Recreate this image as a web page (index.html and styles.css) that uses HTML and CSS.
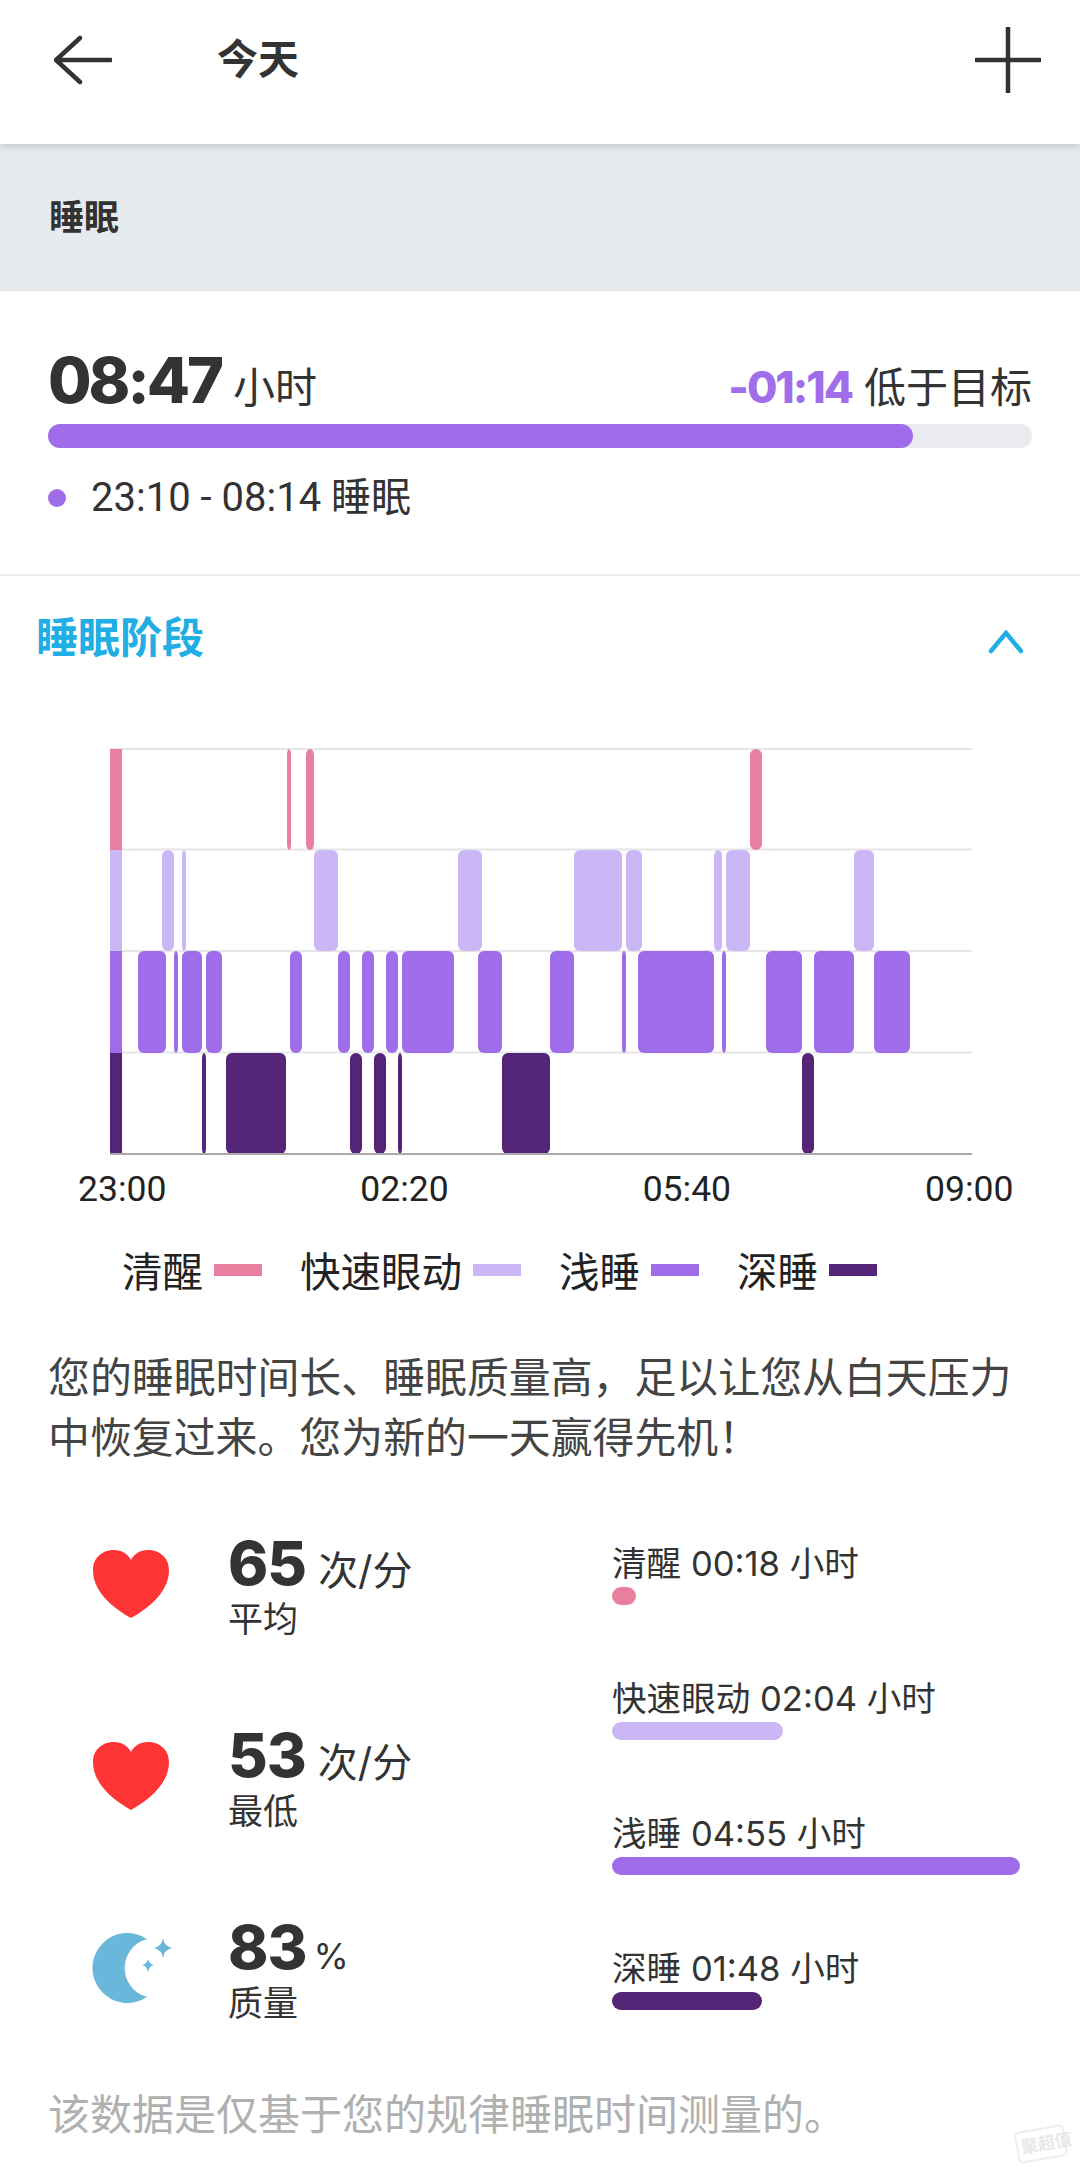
FILE: index.html
```html
<!DOCTYPE html>
<html lang="zh-CN">
<head>
<meta charset="utf-8">
<title>睡眠</title>
<link rel="stylesheet" href="styles.css">
</head>
<body>
<div class="page">
  <header class="topbar">
    <svg class="ico-back" width="58" height="50" viewBox="0 0 58 50"><path d="M26 3 L2 25 L26 47 M2 25 H57"/></svg>
    <h1 class="title">今天</h1>
    <svg class="ico-plus" width="66" height="66" viewBox="0 0 66 66"><path d="M33 0 V66 M1 33 H65"/></svg>
  </header>
  <div class="band"><h2 class="band-title">睡眠</h2></div>

  <section class="summary">
    <div class="sum-head">
      <div class="sum-left"><span class="big">08:47</span><span class="unit">小时</span></div>
      <div class="sum-right"><span class="delta">-01:14</span><span class="unit">低于目标</span></div>
    </div>
    <div class="track"><div class="fill"></div></div>
    <div class="period"><span class="dot"></span><span>23:10 - 08:14 睡眠</span></div>
  </section>

  <section class="stages">
    <div class="stages-head">
      <h3 class="stages-title">睡眠阶段</h3>
      <svg class="ico-chev" width="36" height="24" viewBox="0 0 36 24"><path d="M3 21 L18 3 L33 21"/></svg>
    </div>
    <svg class="chart" width="862" height="408" viewBox="110 748 862 408">
      <g class="lines">
        <line x1="110" x2="972" y1="749" y2="749"/>
        <line x1="110" x2="972" y1="849.5" y2="849.5"/>
        <line x1="110" x2="972" y1="951" y2="951"/>
        <line x1="110" x2="972" y1="1052.5" y2="1052.5"/>
      </g>
      <g class="awake">
        <rect class="edge" x="110" y="749" width="12" height="101"/>
        <rect x="287" y="749" width="4" height="101"/>
        <rect x="306" y="749" width="8" height="101"/>
        <rect x="750" y="749" width="12" height="101"/>
      </g>
      <g class="rem">
        <rect class="edge" x="110" y="850" width="12" height="101"/>
        <rect x="162" y="850" width="12" height="101"/>
        <rect x="182" y="850" width="4" height="101"/>
        <rect x="314" y="850" width="24" height="101"/>
        <rect x="458" y="850" width="24" height="101"/>
        <rect x="574" y="850" width="48" height="101"/>
        <rect x="626" y="850" width="16" height="101"/>
        <rect x="714" y="850" width="8" height="101"/>
        <rect x="726" y="850" width="24" height="101"/>
        <rect x="854" y="850" width="20" height="101"/>
      </g>
      <g class="light">
        <rect class="edge" x="110" y="951" width="12" height="102"/>
        <rect x="138" y="951" width="28" height="102"/>
        <rect x="174" y="951" width="4" height="102"/>
        <rect x="182" y="951" width="20" height="102"/>
        <rect x="206" y="951" width="16" height="102"/>
        <rect x="290" y="951" width="12" height="102"/>
        <rect x="338" y="951" width="12" height="102"/>
        <rect x="362" y="951" width="12" height="102"/>
        <rect x="386" y="951" width="12" height="102"/>
        <rect x="402" y="951" width="52" height="102"/>
        <rect x="478" y="951" width="24" height="102"/>
        <rect x="550" y="951" width="24" height="102"/>
        <rect x="622" y="951" width="4" height="102"/>
        <rect x="638" y="951" width="76" height="102"/>
        <rect x="722" y="951" width="4" height="102"/>
        <rect x="766" y="951" width="36" height="102"/>
        <rect x="814" y="951" width="40" height="102"/>
        <rect x="874" y="951" width="36" height="102"/>
      </g>
      <g class="deep">
        <rect class="edge" x="110" y="1053" width="12" height="101"/>
        <rect x="202" y="1053" width="4" height="101"/>
        <rect x="226" y="1053" width="60" height="101"/>
        <rect x="350" y="1053" width="12" height="101"/>
        <rect x="374" y="1053" width="12" height="101"/>
        <rect x="398" y="1053" width="4" height="101"/>
        <rect x="502" y="1053" width="48" height="101"/>
        <rect x="802" y="1053" width="12" height="101"/>
      </g>
      <line class="axis" x1="110" x2="972" y1="1154" y2="1154"/>
    </svg>
    <div class="times"><span>23:00</span><span>02:20</span><span>05:40</span><span>09:00</span></div>
    <div class="legend">
      <div class="leg"><span>清醒</span><i class="sw c-awake"></i></div>
      <div class="leg"><span>快速眼动</span><i class="sw c-rem"></i></div>
      <div class="leg"><span>浅睡</span><i class="sw c-light"></i></div>
      <div class="leg"><span>深睡</span><i class="sw c-deep"></i></div>
    </div>
    <p class="note">您的睡眠时间长、睡眠质量高，足以让您从白天压力中恢复过来。您为新的一天赢得先机！</p>
  </section>

  <section class="stats">
    <div class="col-vitals">
      <div class="vital">
        <svg class="ico-heart" width="76" height="68" viewBox="0 0 76 68"><path d="M38 68 C24 60 0 44 0 20 C0 7 10 0 21 0 C29 0 35 4 38 10 C41 4 47 0 55 0 C66 0 76 7 76 20 C76 44 52 60 38 68 Z"/></svg>
        <div class="v-text"><div class="v-line"><span class="v-num">65</span><span class="v-unit">次/分</span></div><div class="v-label">平均</div></div>
      </div>
      <div class="vital">
        <svg class="ico-heart" width="76" height="68" viewBox="0 0 76 68"><path d="M38 68 C24 60 0 44 0 20 C0 7 10 0 21 0 C29 0 35 4 38 10 C41 4 47 0 55 0 C66 0 76 7 76 20 C76 44 52 60 38 68 Z"/></svg>
        <div class="v-text"><div class="v-line"><span class="v-num">53</span><span class="v-unit">次/分</span></div><div class="v-label">最低</div></div>
      </div>
      <div class="vital">
        <svg class="ico-moon" width="80" height="70" viewBox="0 0 80 70"><path class="moon" d="M55 6 A35 35 0 1 0 55 64 A30 30 0 0 1 55 6 Z"/><path class="star" d="M71 5 Q72 13 80 15 Q72 17 71 25 Q70 17 62 15 Q70 13 71 5 Z"/><path class="star" d="M56 26 Q57 31 62 32 Q57 33 56 39 Q55 33 50 32 Q55 31 56 26 Z"/></svg>
        <div class="v-text"><div class="v-line"><span class="v-num">83</span><span class="v-pct">%</span></div><div class="v-label">质量</div></div>
      </div>
    </div>
    <div class="col-stages">
      <div class="st"><div class="st-text">清醒 00:18 小时</div><div class="st-bar c-awake w-awake"></div></div>
      <div class="st"><div class="st-text">快速眼动 02:04 小时</div><div class="st-bar c-rem w-rem"></div></div>
      <div class="st"><div class="st-text">浅睡 04:55 小时</div><div class="st-bar c-light w-light"></div></div>
      <div class="st"><div class="st-text">深睡 01:48 小时</div><div class="st-bar c-deep w-deep"></div></div>
    </div>
  </section>

  <p class="foot">该数据是仅基于您的规律睡眠时间测量的。</p>
  <div class="wm"><span>聚超值</span></div>
</div>
</body>
</html>
```
FILE: styles.css
```css
* { box-sizing: border-box; }
html, body { margin: 0; padding: 0; background: #fff; }
.page {
  position: relative;
  width: 1080px;
  height: 2173px;
  overflow: hidden;
  color: #333;
  font-family: "Inter", "Noto Sans CJK SC", sans-serif;
}
h1, h2, h3, p { margin: 0; font-weight: inherit; font-size: inherit; }

.topbar {
  display: flex;
  align-items: center;
  height: 144px;
  padding: 0 39px 24px 54px;
  background: #fff;
  position: relative;
  z-index: 1;
  box-shadow: 0 2px 8px rgba(0,0,0,.18);
}
.ico-back path, .ico-plus path { fill: none; stroke: #333; stroke-width: 4.5; stroke-linecap: round; stroke-linejoin: miter; }
.title { margin: -2px 0 0 105px; font-size: 41px; font-weight: 700; line-height: 48px; flex: 1; }
.band { height: 146px; background: #e7ebee; padding-left: 49px; display: flex; align-items: center; }
.band-title { font-size: 35px; font-weight: 700; line-height: 40px; }

.summary { height: 286px; padding: 53px 48px 0; border-bottom: 2px solid #eee; border-top: 1px solid #e6e6e6; }
.sum-head { display: flex; justify-content: space-between; align-items: baseline; height: 76px; }
.big { font-size: 63px; font-weight: 800; line-height: 72px; letter-spacing: -3px; }
.unit { font-size: 42px; margin-left: 12px; color: #333; }
.delta { font-size: 44px; font-weight: 800; color: #a06eea; letter-spacing: -2px; }
.track { margin-top: 4px; height: 24px; border-radius: 12px; background: #e9ebee; }
.fill { width: 865px; height: 24px; border-radius: 12px; background: #9f6dea; }
.period { display: flex; align-items: center; margin-top: 27px; font-family: "Roboto", "Noto Sans CJK SC", sans-serif; font-size: 40px; line-height: 46px; }
.dot { width: 18px; height: 18px; border-radius: 50%; background: #9f6dea; margin-right: 25px; }

.stages-head { display: flex; justify-content: space-between; align-items: center; height: 172px; padding: 0 56px 48px 36px; }
.stages-title { font-size: 42px; font-weight: 700; color: #20aee4; line-height: 50px; }
.ico-chev { margin-top: 8px; }
.ico-chev path { fill: none; stroke: #20aee4; stroke-width: 4.5; stroke-linecap: round; }
.chart { display: block; margin-left: 110px; }
.lines line { stroke: #e6e6e6; stroke-width: 2; }
.axis { stroke: #aaa; stroke-width: 2; }
.chart rect { rx: 6px; }
.chart rect.edge { rx: 0; }
.awake { fill: #e97f9e; }
.rem { fill: #cbb7f5; }
.light { fill: #9f6dea; }
.deep { fill: #552577; }
.times { display: flex; justify-content: space-between; width: 935px; margin: 11px 0 0 78px; font-family: "Roboto", "Noto Sans CJK SC", sans-serif; font-size: 35.5px; line-height: 44px; color: #222; }
.times span { width: 88px; text-align: center; white-space: nowrap; }
.legend { display: flex; margin: 37px 0 0 122px; gap: 38px; font-size: 40.5px; line-height: 50px; color: #222; }
.leg { display: flex; align-items: center; gap: 11px; }
.sw { display: block; width: 48px; height: 12px; margin-top: -6px; }
.c-awake { background: #e97f9e; }
.c-rem { background: #cbb7f5; }
.c-light { background: #9f6dea; }
.c-deep { background: #552577; }
.note { margin: 50px 48px 0 48px; font-size: 41.9px; line-height: 59.5px; color: #444; }

.stats { display: flex; margin-top: 64px; }
.col-vitals { width: 612px; padding-left: 92px; }
.vital { display: flex; height: 192px; }
.ico-heart, .ico-moon { flex: none; }
.ico-heart { margin: 19px 59px 0 1px; }
.ico-moon { margin: 18px 56px 0 0; }
.v-line { display: flex; align-items: baseline; height: 64px; }
.v-num { font-size: 61px; font-weight: 800; line-height: 64px; letter-spacing: -1px; }
.v-unit { font-size: 40px; line-height: 46px; margin-left: 12px; }
.v-pct { font-size: 36px; line-height: 46px; margin-left: 7px; }
.v-label { font-size: 35px; line-height: 40px; margin-top: 4px; }
.col-stages { width: 468px; }
.st { height: 135px; padding-top: 11px; }
.st-text { font-size: 34.6px; line-height: 42px; }
.st-bar { height: 18px; border-radius: 9px; margin-top: 3px; }
.w-awake { width: 24px; }
.w-rem { width: 171px; }
.w-light { width: 408px; }
.w-deep { width: 150px; }
.foot { margin: -17px 0 0 48px; font-size: 42px; line-height: 50px; color: #b0b0b0; }

.wm {
  position: absolute;
  left: 1016px;
  top: 2128px;
  width: 50px;
  height: 32px;
  border: 2px solid #eee;
  border-radius: 5px;
  transform: rotate(-10deg);
  color: #e8e8e8;
  font-size: 17px;
  font-weight: 700;
  line-height: 28px;
  white-space: nowrap;
}
.wm span { display: block; margin-left: 3px; }
.moon { fill: #69b7da; }
.star { fill: #69b7da; }
.ico-heart path { fill: #ff3535; }
```
